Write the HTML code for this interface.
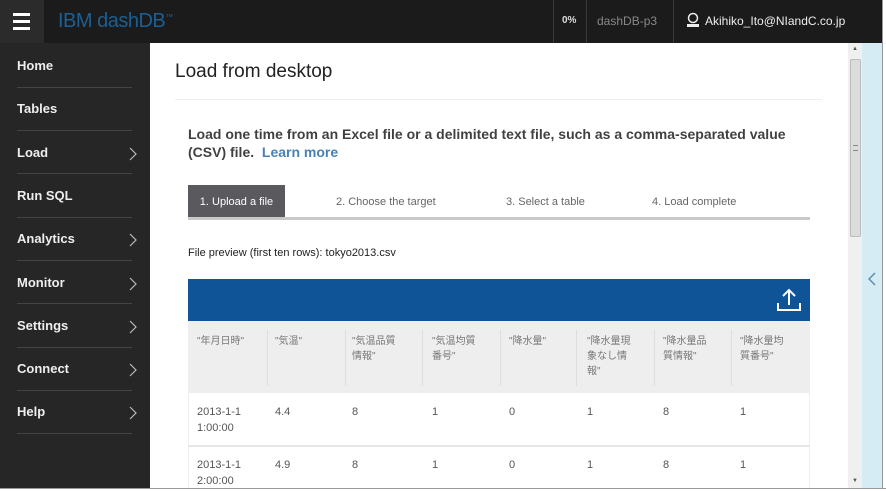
<!DOCTYPE html>
<html><head><meta charset="utf-8"><style>
*{margin:0;padding:0;box-sizing:border-box}
body{width:886px;height:491px;overflow:hidden;background:#fff;font-family:"Liberation Sans","Noto Sans CJK JP",sans-serif;position:relative}
.a{position:absolute}
#top{left:0;top:0;width:886px;height:43px;background:#1b1b1b}
#ham{left:0;top:0;width:44px;height:43px;background:#2b2b2b}
#ham i{position:absolute;left:13px;width:17px;height:3px;background:#fff}
#side{left:0;top:43px;width:150px;height:448px;background:#262626}
.it{position:absolute;left:17px;color:#fff;font-size:13px;font-weight:bold;opacity:.92}
.sep{position:absolute;left:17px;width:115px;height:1px;background:#444}
.chev{position:absolute;left:129px}
.th{font-size:10px;color:#777;line-height:15px}
.td{font-size:11px;color:#555;line-height:16px}
.vs{position:absolute;width:1px;background:#ddd}
</style></head><body>
<div class="a" id="top"></div>
<div class="a" id="ham"><i style="top:13px"></i><i style="top:20px"></i><i style="top:27px"></i></div>
<div class="a" style="left:58px;top:10px;color:#1d5f92;font-size:20px;letter-spacing:-0.5px">IBM dashDB<sup style="font-size:8px">™</sup></div>
<div class="a" style="left:553px;top:0;width:1px;height:43px;background:#3a3a3a"></div>
<div class="a" style="left:586px;top:0;width:1px;height:43px;background:#3a3a3a"></div>
<div class="a" style="left:673px;top:0;width:1px;height:43px;background:#3a3a3a"></div>
<div class="a" style="left:562px;top:15px;color:#ddd;font-size:10px;font-weight:bold">0%</div>
<div class="a" style="left:597px;top:14px;color:#888;font-size:12px">dashDB-p3</div>
<svg class="a" style="left:686px;top:12px" width="14" height="16"><circle cx="7" cy="6" r="4.5" fill="none" stroke="#eee" stroke-width="1.5"/><rect x="1" y="12" width="12" height="3" fill="#eee"/></svg>
<div class="a" style="left:705px;top:14px;color:#eee;font-size:12px">Akihiko_Ito@NIandC.co.jp</div>

<div class="a" id="side">
<div class="it" style="top:15px">Home</div><div class="sep" style="top:44px"></div>
<div class="it" style="top:58px">Tables</div><div class="sep" style="top:87px"></div>
<div class="it" style="top:102px">Load</div><svg class="chev" style="top:104px" width="8" height="14"><path d="M1 1L7 7L1 13" fill="none" stroke="#bbb" stroke-width="1.2"/></svg><div class="sep" style="top:130px"></div>
<div class="it" style="top:145px">Run SQL</div><div class="sep" style="top:174px"></div>
<div class="it" style="top:188px">Analytics</div><svg class="chev" style="top:190px" width="8" height="14"><path d="M1 1L7 7L1 13" fill="none" stroke="#bbb" stroke-width="1.2"/></svg><div class="sep" style="top:217px"></div>
<div class="it" style="top:232px">Monitor</div><svg class="chev" style="top:234px" width="8" height="14"><path d="M1 1L7 7L1 13" fill="none" stroke="#bbb" stroke-width="1.2"/></svg><div class="sep" style="top:260px"></div>
<div class="it" style="top:275px">Settings</div><svg class="chev" style="top:277px" width="8" height="14"><path d="M1 1L7 7L1 13" fill="none" stroke="#bbb" stroke-width="1.2"/></svg><div class="sep" style="top:304px"></div>
<div class="it" style="top:318px">Connect</div><svg class="chev" style="top:320px" width="8" height="14"><path d="M1 1L7 7L1 13" fill="none" stroke="#bbb" stroke-width="1.2"/></svg><div class="sep" style="top:347px"></div>
<div class="it" style="top:361px">Help</div><svg class="chev" style="top:363px" width="8" height="14"><path d="M1 1L7 7L1 13" fill="none" stroke="#bbb" stroke-width="1.2"/></svg><div class="sep" style="top:390px"></div>
</div>

<div class="a" style="left:175px;top:61px;font-size:19px;color:#222">Load from desktop</div>
<div class="a" style="left:175px;top:99px;width:647px;height:1px;background:#eee"></div>
<div class="a" style="left:188px;top:125px;font-size:14px;color:#111;font-weight:bold;line-height:18px;width:630px;opacity:.8">Load one time from an Excel file or a delimited text file, such as a comma-separated value (CSV) file.&nbsp; <span style="color:#1a63a5">Learn more</span></div>

<div class="a" style="left:188px;top:185px;width:97px;height:33px;background:#5a5a5e;color:#fff;font-size:11px;line-height:34px;text-align:center">1. Upload a file</div>
<div class="a" style="left:336px;top:196px;font-size:11px;color:#666">2. Choose the target</div>
<div class="a" style="left:506px;top:196px;font-size:11px;color:#666">3. Select a table</div>
<div class="a" style="left:652px;top:196px;font-size:11px;color:#666">4. Load complete</div>
<div class="a" style="left:188px;top:217px;width:622px;height:3px;background:#c9c9c9"></div>
<div class="a" style="left:188px;top:247px;font-size:11px;color:#222">File preview (first ten rows): tokyo2013.csv</div>

<div class="a" style="left:188px;top:279px;width:622px;height:42px;background:#0f5496"></div>
<svg class="a" style="left:775px;top:287px" width="28" height="26"><path d="M14 3V18M8 9L14 3L20 9M3 16V23H25V16" fill="none" stroke="#fff" stroke-width="2"/></svg>
<div class="a" style="left:188px;top:321px;width:622px;height:72px;background:#eeeeee"></div>
<div class="a" style="left:188px;top:393px;width:622px;height:98px;background:#fff;border-left:1px solid #eee;border-right:1px solid #eee"></div>
<div class="a" style="left:188px;top:445px;width:622px;height:2px;background:#e6e6e6"></div>
<div class="vs" style="left:267px;top:330px;height:56px"></div>
<div class="vs" style="left:345px;top:330px;height:56px"></div>
<div class="vs" style="left:422px;top:330px;height:56px"></div>
<div class="vs" style="left:500px;top:330px;height:56px"></div>
<div class="vs" style="left:576px;top:330px;height:56px"></div>
<div class="vs" style="left:654px;top:330px;height:56px"></div>
<div class="vs" style="left:731px;top:330px;height:56px"></div>

<div class="a th" style="left:197px;top:334px">"年月日時"</div>
<div class="a th" style="left:275px;top:334px">"気温"</div>
<div class="a th" style="left:352px;top:334px;width:60px">"気温品質<br>情報"</div>
<div class="a th" style="left:432px;top:334px">"気温均質<br>番号"</div>
<div class="a th" style="left:509px;top:334px">"降水量"</div>
<div class="a th" style="left:587px;top:334px">"降水量現<br>象なし情<br>報"</div>
<div class="a th" style="left:663px;top:334px">"降水量品<br>質情報"</div>
<div class="a th" style="left:740px;top:334px">"降水量均<br>質番号"</div>

<div class="a td" style="left:197px;top:404px">2013-1-1<br>1:00:00</div>
<div class="a td" style="left:275px;top:404px">4.4</div><div class="a td" style="left:352px;top:404px">8</div><div class="a td" style="left:432px;top:404px">1</div><div class="a td" style="left:509px;top:404px">0</div><div class="a td" style="left:587px;top:404px">1</div><div class="a td" style="left:663px;top:404px">8</div><div class="a td" style="left:740px;top:404px">1</div>
<div class="a td" style="left:197px;top:457px">2013-1-1<br>2:00:00</div>
<div class="a td" style="left:275px;top:457px">4.9</div><div class="a td" style="left:352px;top:457px">8</div><div class="a td" style="left:432px;top:457px">1</div><div class="a td" style="left:509px;top:457px">0</div><div class="a td" style="left:587px;top:457px">1</div><div class="a td" style="left:663px;top:457px">8</div><div class="a td" style="left:740px;top:457px">1</div>

<div class="a" style="left:848px;top:43px;width:14px;height:448px;background:#f0f0f0"></div>
<div class="a" style="left:850px;top:59px;width:11px;height:178px;background:#dcdcdc;border:1px solid #bbb;border-radius:2px"></div>
<div class="a" style="left:853px;top:145px;width:5px;height:6px;border-top:1px solid #888;border-bottom:1px solid #888"></div>
<div class="a" style="left:852px;top:46px;font-size:6px;color:#555">▲</div>
<div class="a" style="left:852px;top:478px;font-size:6px;color:#555">▼</div>
<div class="a" style="left:862px;top:43px;width:20px;height:448px;background:#d5ecf5"></div>
<svg class="a" style="left:868px;top:272px" width="8" height="14"><path d="M7 1L1 7L7 13" fill="none" stroke="#5b8fb0" stroke-width="1.5"/></svg>
<div class="a" style="left:882px;top:0;width:4px;height:491px;background:#fff;border-left:1px solid #999"></div>
<div class="a" style="left:0;top:488px;width:886px;height:3px;background:#fff;border-top:1px solid #999"></div>
</body></html>
